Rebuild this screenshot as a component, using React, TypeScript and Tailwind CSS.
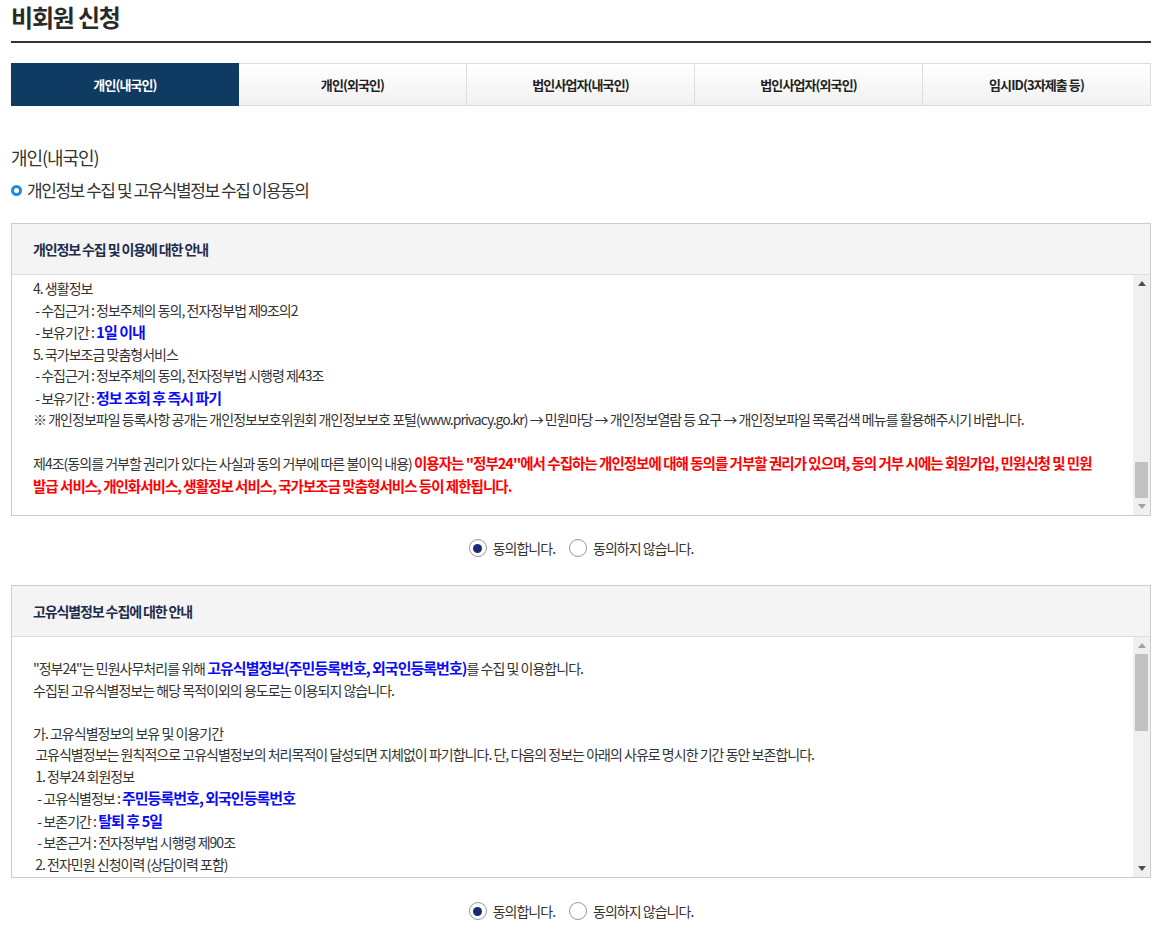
import { useState } from 'react'

const tabs = ['개인(내국인)', '개인(외국인)', '법인사업자(내국인)', '법인사업자(외국인)', '임시ID(3자제출 등)']

function Blue({ children }: { children: React.ReactNode }) {
    return <b className="text-[15px] font-bold text-[#0b0bf5]">{children}</b>
}

function ScrollBar({ atTop }: { atTop: boolean }) {
    return (
        <div className="w-[17px] shrink-0 bg-[#f0f0f0] flex flex-col">
            <div className="h-[17px] flex items-center justify-center">
                <span className={`w-0 h-0 border-x-[4px] border-x-transparent border-b-[5px] ${atTop ? 'border-b-[#a3a3a3]' : 'border-b-[#505050]'}`} />
            </div>
            <div className="flex-1 flex flex-col px-[2px]">
                {atTop ? (
                    <>
                        <div className="h-[77px] bg-[#c1c1c1]" />
                        <div className="flex-1" />
                    </>
                ) : (
                    <>
                        <div className="flex-1" />
                        <div className="h-[36px] bg-[#c1c1c1]" />
                    </>
                )}
            </div>
            <div className="h-[17px] flex items-center justify-center">
                <span className={`w-0 h-0 border-x-[4px] border-x-transparent border-t-[5px] ${atTop ? 'border-t-[#505050]' : 'border-t-[#a3a3a3]'}`} />
            </div>
        </div>
    )
}

function AgreeBox({ title, atTop, padTop, children }: { title: string; atTop: boolean; padTop: string; children: React.ReactNode }) {
    return (
        <div className="border border-[#cccccc]">
            <div className="h-[51px] bg-[#f4f4f4] border-b border-[#dddddd] flex items-center px-[21px]">
                <h3 className="text-[14px] font-bold text-[#1e2d4d] tracking-[-0.08em]">{title}</h3>
            </div>
            <div className="h-[240px] flex">
                <div className={`flex-1 overflow-hidden pl-[21px] pr-2 ${padTop} text-[14px] leading-[21.5px] text-[#333] tracking-[-0.07em] whitespace-pre`}>
                    {children}
                </div>
                <ScrollBar atTop={atTop} />
            </div>
        </div>
    )
}

function Radio({ checked, label, onClick }: { checked: boolean; label: string; onClick: () => void }) {
    return (
        <label className="flex items-center gap-[6px] cursor-pointer" onClick={onClick}>
            <span className="w-[18px] h-[18px] rounded-full border border-[#999] bg-white flex items-center justify-center">
                {checked && <span className="w-[9px] h-[9px] rounded-full bg-[#1b2a78]" />}
            </span>
            <span className="text-[14px] text-[#333] tracking-[-0.07em]">{label}</span>
        </label>
    )
}

function AgreeRadios() {
    const [agree, setAgree] = useState(true)
    return (
        <div className="flex justify-center gap-[14px] h-5 items-center">
            <Radio checked={agree} label="동의합니다." onClick={() => setAgree(true)} />
            <Radio checked={!agree} label="동의하지 않습니다." onClick={() => setAgree(false)} />
        </div>
    )
}

export default function App() {
    const [tab, setTab] = useState(0)

    return (
        <div className="bg-white min-h-screen px-[11px] font-['Noto_Sans_CJK_KR','Noto_Sans',sans-serif] text-[#333]">
            <div className="w-[1140px]">
                <h1 className="text-[24px] font-bold leading-[34px] pb-[7px] border-b-2 border-[#333] text-[#2a2a2a] tracking-[-0.05em]">
                    비회원 신청
                </h1>

                <div className="mt-5 grid grid-cols-5">
                    {tabs.map((t, i) => (
                        <button
                            key={t}
                            onClick={() => setTab(i)}
                            className={`h-[43px] text-[13px] font-bold tracking-[-0.07em] ${
                                tab === i
                                    ? 'bg-[#0f3a62] text-white border border-[#0f3a62]'
                                    : 'bg-gradient-to-b from-white to-[#f1f1f1] text-[#222] border-y border-r border-[#dddddd]'
                            }`}
                        >
                            {t}
                        </button>
                    ))}
                </div>

                <h2 className="mt-[39px] text-[18px] leading-[24px] tracking-[-0.06em] text-[#333]">개인(내국인)</h2>
                <div className="mt-[9px] flex items-center gap-[5px] h-6">
                    <span className="w-[11px] h-[11px] rounded-full border-[3px] border-[#1a8ae5]" />
                    <span className="text-[17px] tracking-[-0.085em] text-[#333]">개인정보 수집 및 고유식별정보 수집 이용동의</span>
                </div>

                <div className="mt-[21px]">
                    <AgreeBox title="개인정보 수집 및 이용에 대한 안내" atTop={false} padTop="pt-[3px]">
                        <div>4. 생활정보</div>
                        <div> - 수집근거 : 정보주체의 동의, 전자정부법 제9조의2</div>
                        <div> - 보유기간 : <Blue>1일 이내</Blue></div>
                        <div>5. 국가보조금 맞춤형서비스</div>
                        <div> - 수집근거 : 정보주체의 동의, 전자정부법 시행령 제43조</div>
                        <div> - 보유기간 : <Blue>정보 조회 후 즉시 파기</Blue></div>
                        <div>※ 개인정보파일 등록사항 공개는 개인정보보호위원회 개인정보보호 포털(www.privacy.go.kr) → 민원마당 → 개인정보열람 등 요구 → 개인정보파일 목록검색 메뉴를 활용해주시기 바랍니다.</div>
                        <div> </div>
                        <div>
                            제4조(동의를 거부할 권리가 있다는 사실과 동의 거부에 따른 불이익 내용){' '}
                            <b className="text-[14.5px] font-bold text-[#ff0000]">
                                이용자는 "정부24"에서 수집하는 개인정보에 대해 동의를 거부할 권리가 있으며, 동의 거부 시에는 회원가입, 민원신청 및 민원{'\n'}발급 서비스, 개인화서비스, 생활정보 서비스, 국가보조금 맞춤형서비스 등이 제한됩니다.
                            </b>
                        </div>
                    </AgreeBox>
                </div>

                <div className="mt-[22px]">
                    <AgreeRadios />
                </div>

                <div className="mt-[27px]">
                    <AgreeBox title="고유식별정보 수집에 대한 안내" atTop={true} padTop="pt-5">
                        <div>"정부24"는 민원사무처리를 위해 <Blue>고유식별정보(주민등록번호, 외국인등록번호)</Blue>를 수집 및 이용합니다.</div>
                        <div>수집된 고유식별정보는 해당 목적이외의 용도로는 이용되지 않습니다.</div>
                        <div> </div>
                        <div>가. 고유식별정보의 보유 및 이용기간</div>
                        <div> 고유식별정보는 원칙적으로 고유식별정보의 처리목적이 달성되면 지체없이 파기합니다. 단, 다음의 정보는 아래의 사유로 명시한 기간 동안 보존합니다.</div>
                        <div> 1. 정부24 회원정보</div>
                        <div>  - 고유식별정보 : <Blue>주민등록번호, 외국인등록번호</Blue></div>
                        <div>  - 보존기간 : <Blue>탈퇴 후 5일</Blue></div>
                        <div>  - 보존근거 : 전자정부법 시행령 제90조</div>
                        <div> 2. 전자민원 신청이력 (상담이력 포함)</div>
                        <div>  - 고유식별정보 : <Blue>주민등록번호, 외국인등록번호</Blue></div>
                    </AgreeBox>
                </div>

                <div className="mt-[23px] pb-4">
                    <AgreeRadios />
                </div>
            </div>
        </div>
    )
}
